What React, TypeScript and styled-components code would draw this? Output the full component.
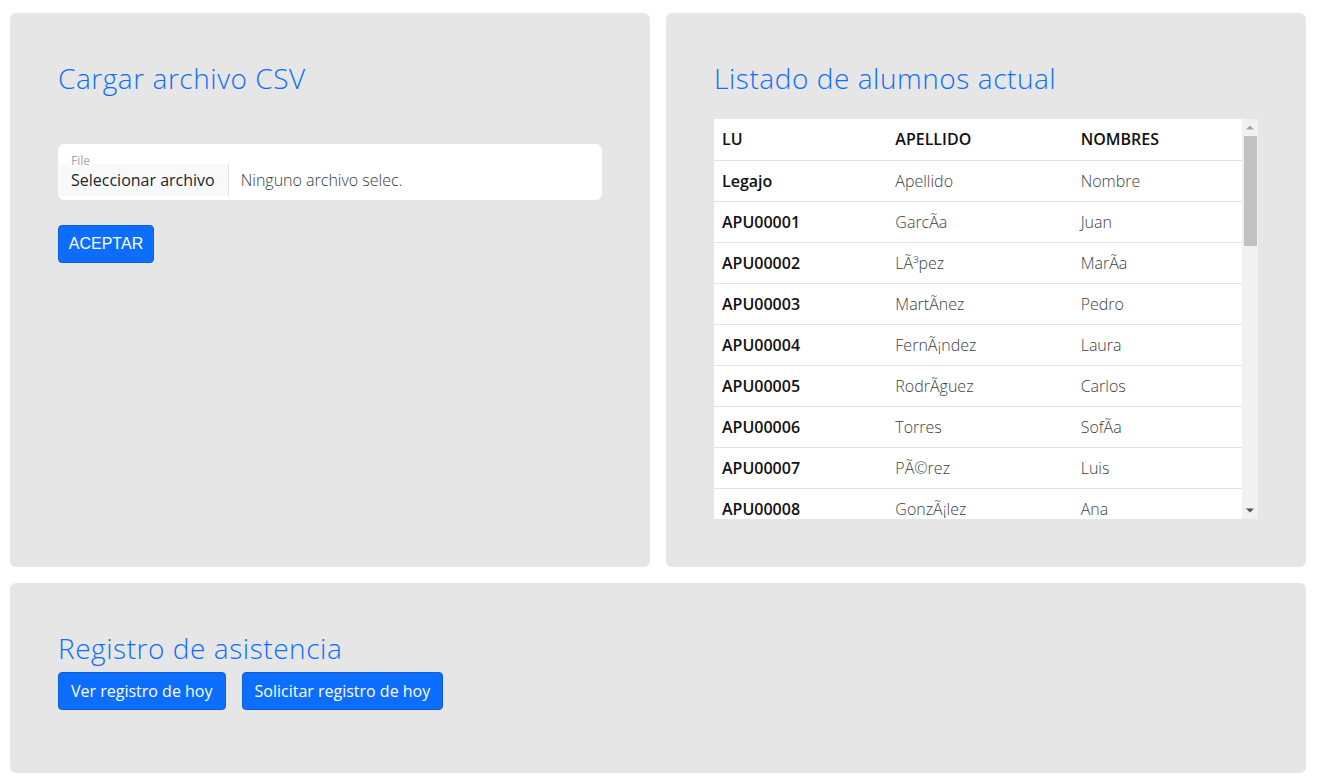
import React from "react";
import styled, { createGlobalStyle } from "styled-components";

const GlobalStyle = createGlobalStyle`
  html, body { margin: 0; padding: 0; background: #ffffff; }
  body { font-family: "Open Sans", "Noto Sans", sans-serif; color: #212529; }
  * { box-sizing: border-box; }
`;

const Page = styled.div`
  display: grid;
  grid-template-columns: 640px 640px;
  gap: 16px;
  padding: 13px 14px 10px 10px;
`;

const Panel = styled.section<{ $wide?: boolean; $bottom?: number }>`
  background: #e6e6e6;
  border-radius: 6px;
  padding: 48px 48px ${(p) => p.$bottom ?? 48}px 48px;
  grid-column: ${(p) => (p.$wide ? "1 / span 2" : "auto")};
  display: flex;
  flex-direction: column;
`;

const Title = styled.h2<{ $gap?: number }>`
  margin: 0 0 ${(p) => p.$gap ?? 24}px 0;
  font-size: 28px;
  line-height: 34px;
  font-weight: 300;
  color: #0d6efd;
  letter-spacing: 0.55px;
`;

const FileBox = styled.div`
  margin-top: 25px;
  background: #ffffff;
  border-radius: 6px;
  padding: 11px 0 4px 0;
  display: flex;
  flex-direction: column;
`;

const FileLabel = styled.span`
  align-self: flex-start;
  margin-left: 10px;
  padding: 0 3px;
  font-size: 12px;
  line-height: 12px;
  color: #a3a7ab;
  background: #ffffff;
  border-radius: 4px;
  margin-bottom: -3px;
  position: relative;
  z-index: 1;
`;

const FileRow = styled.div`
  display: flex;
  align-items: center;
  height: 32px;
  font-size: 16px;
`;

const FileButton = styled.span`
  height: 100%;
  display: flex;
  align-items: center;
  padding: 0 13px;
  background: #f8f9fa;
  border-right: 1px solid #dee2e6;
  color: #212529;
`;

const FileName = styled.span`
  padding-left: 12px;
  color: #343a40;
  font-weight: 300;
`;

const SubmitButton = styled.button`
  margin-top: 25px;
  align-self: flex-start;
  width: 96px;
  height: 38px;
  border: 1px solid #0b5ed7;
  border-radius: 4px;
  background: #0d6efd;
  color: #ffffff;
  font-family: "Liberation Sans", Arial, sans-serif;
  font-size: 16px;
`;

const TableFrame = styled.div`
  height: 400px;
  display: flex;
  background: #ffffff;
`;

const TableClip = styled.div`
  flex: 1;
  overflow: hidden;
`;

const ScrollBar = styled.div`
  width: 16px;
  background: #f1f1f1;
  display: flex;
  flex-direction: column;
`;

const ArrowButton = styled.div`
  height: 17px;
  display: flex;
  align-items: center;
  justify-content: center;
`;

const Thumb = styled.div<{ $h: number }>`
  height: ${(p) => p.$h}px;
  margin: 0 1px 0 2px;
  background: #c1c1c1;
`;

const Spacer = styled.div`
  flex: 1;
`;

const Table = styled.table`
  width: 100%;
  border-collapse: collapse;
  font-size: 16px;
  table-layout: fixed;
`;

const Col = styled.col<{ $w: number }>`
  width: ${(p) => p.$w}px;
`;

const Th = styled.th`
  text-align: left;
  font-weight: 600;
  color: #111;
  padding: 0 8px;
  height: 41px;
  border-bottom: 1px solid #dee2e6;
  white-space: nowrap;
`;

const Td = styled.td`
  padding: 0 8px;
  height: 41px;
  border-bottom: 1px solid #dee2e6;
  color: #3b3f44;
  font-weight: 300;
  white-space: nowrap;
`;

const ButtonRow = styled.div`
  display: flex;
  gap: 16px;
`;

const PrimaryButton = styled.button`
  height: 38px;
  padding: 0 12px;
  border: 1px solid #0b5ed7;
  border-radius: 4px;
  background: #0d6efd;
  color: #ffffff;
  font-family: "Open Sans", "Noto Sans", sans-serif;
  font-size: 16px;
`;

const rows: [string, string, string][] = [
  ["Legajo", "Apellido", "Nombre"],
  ["APU00001", "GarcÃa", "Juan"],
  ["APU00002", "LÃ³pez", "MarÃa"],
  ["APU00003", "MartÃnez", "Pedro"],
  ["APU00004", "FernÃ¡ndez", "Laura"],
  ["APU00005", "RodrÃguez", "Carlos"],
  ["APU00006", "Torres", "SofÃa"],
  ["APU00007", "PÃ©rez", "Luis"],
  ["APU00008", "GonzÃ¡lez", "Ana"],
];

const Arrow = ({ up, color }: { up?: boolean; color: string }) => (
  <svg width="8" height="5" viewBox="0 0 8 5">
    <polygon points={up ? "0,4.5 8,4.5 4,0.5" : "0,0.5 8,0.5 4,4.5"} fill={color} />
  </svg>
);

export default function App() {
  return (
    <>
      <GlobalStyle />
      <Page>
        <Panel>
          <Title>Cargar archivo CSV</Title>
          <FileBox>
            <FileLabel>File</FileLabel>
            <FileRow>
              <FileButton>Seleccionar archivo</FileButton>
              <FileName>Ninguno archivo selec.</FileName>
            </FileRow>
          </FileBox>
          <SubmitButton>ACEPTAR</SubmitButton>
        </Panel>
        <Panel>
          <Title>Listado de alumnos actual</Title>
          <TableFrame>
            <TableClip>
              <Table>
                <colgroup>
                  <Col $w={173} />
                  <Col $w={185} />
                  <Col $w={169} />
                </colgroup>
                <thead>
                  <tr>
                    <Th>LU</Th>
                    <Th>APELLIDO</Th>
                    <Th>NOMBRES</Th>
                  </tr>
                </thead>
                <tbody>
                  {rows.map(([lu, ap, no]) => (
                    <tr key={lu}>
                      <Th scope="row">{lu}</Th>
                      <Td>{ap}</Td>
                      <Td>{no}</Td>
                    </tr>
                  ))}
                </tbody>
              </Table>
            </TableClip>
            <ScrollBar>
              <ArrowButton>
                <Arrow up color="#a3a3a3" />
              </ArrowButton>
              <Thumb $h={110} />
              <Spacer />
              <ArrowButton>
                <Arrow color="#505050" />
              </ArrowButton>
            </ScrollBar>
          </TableFrame>
        </Panel>
        <Panel $wide $bottom={63}>
          <Title $gap={7}>Registro de asistencia</Title>
          <ButtonRow>
            <PrimaryButton>Ver registro de hoy</PrimaryButton>
            <PrimaryButton>Solicitar registro de hoy</PrimaryButton>
          </ButtonRow>
        </Panel>
      </Page>
    </>
  );
}
